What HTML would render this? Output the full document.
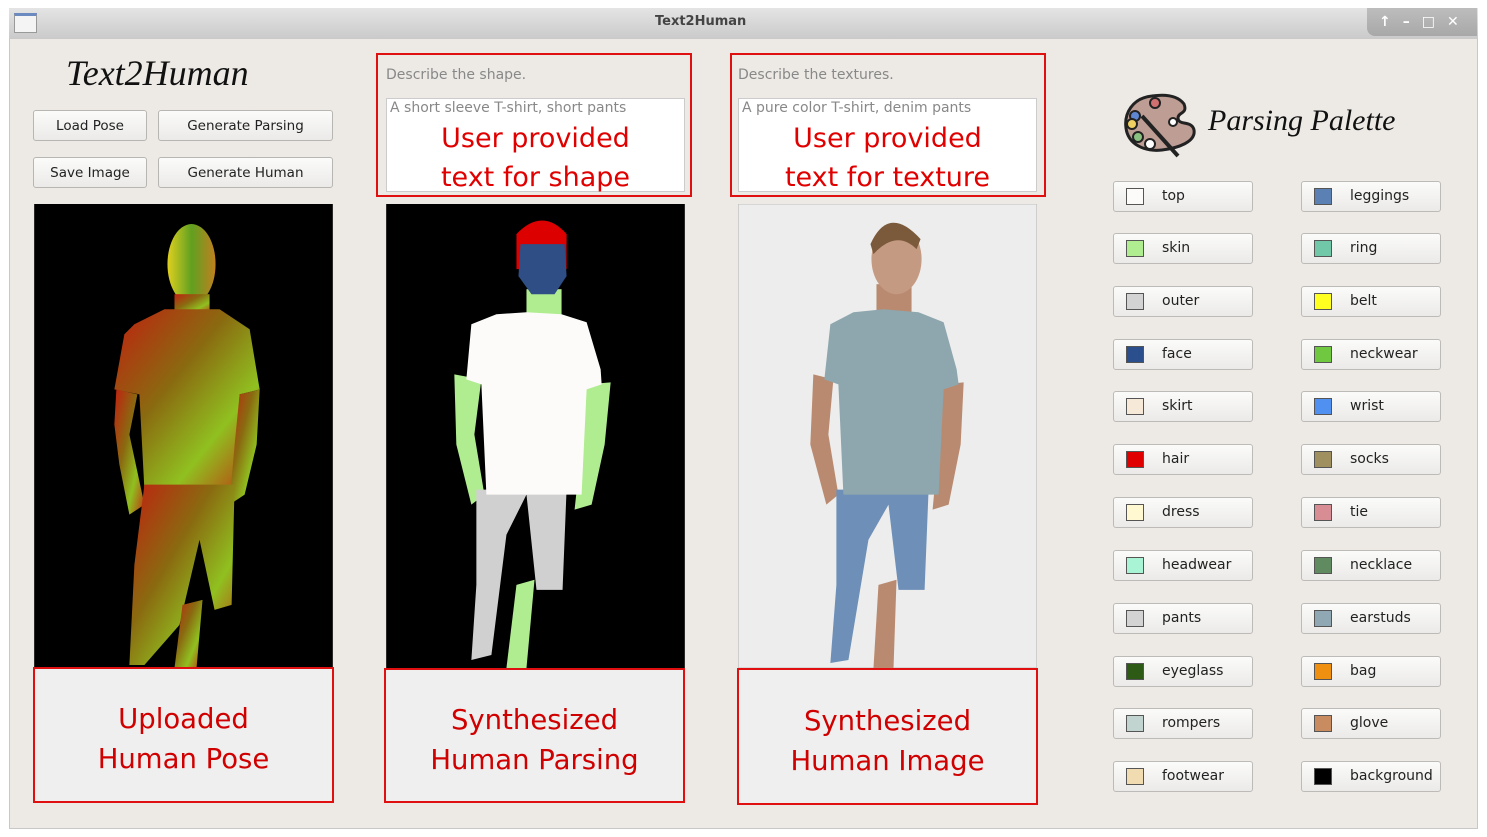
<!DOCTYPE html>
<html><head><meta charset="utf-8"><style>
*{margin:0;padding:0;box-sizing:border-box}
body{width:1487px;height:837px;background:#fff;position:relative;overflow:hidden;font-family:"DejaVu Sans","Liberation Sans",sans-serif}
.a{position:absolute}
.win{left:9px;top:8px;width:1469px;height:821px;background:#edeae6;border:1px solid #c8c8c8}
.title{left:9px;top:8px;width:1469px;height:31px;background:linear-gradient(#e4e4e4,#cacaca)}
.btn{background:linear-gradient(#fbfbfa,#ebeae8);border:1px solid #b8b6b2;border-radius:3px;font-size:13.5px;color:#222;text-align:center;line-height:30px}
.pb{width:140px;height:31px;background:linear-gradient(#fbfbfa,#ebeae8);border:1px solid #bdbbb7;border-radius:3px;font-size:14px;color:#222}
.pb i{position:absolute;left:12px;top:6px;width:18px;height:17px;border:1px solid #555}
.pb span{position:absolute;left:48px;top:6px}
.red{border:2px solid #e01010}
.lbl{background:#efefef;color:#d00000;font-size:27.5px;text-align:center;line-height:40px}
.hint{font-size:14px;color:#888}
.tb{background:#fff;border:1px solid #ccc}
.big{color:#e00000;font-size:27px;text-align:center;line-height:39px;width:100%;margin-top:2px}
.script{font-family:"Liberation Serif",cursive;font-style:italic}
</style></head><body>
<div class="a win"></div>
<div class="a title"></div>
<div class="a" style="left:655px;top:14px;font-size:13px;font-weight:bold;color:#444">Text2Human</div>
<div class="a" style="left:14px;top:13px;width:23px;height:20px;border:1px solid #999;background:#f4f4f4;border-top:3px solid #6a8ac0"></div>
<div class="a" style="left:1367px;top:8px;width:110px;height:28px;background:linear-gradient(#bdbdbd,#a8a8a8);border-radius:0 0 0 8px;color:#fff;font-size:14px;line-height:28px;letter-spacing:12px;padding-left:12px;font-weight:bold">↑–□✕</div>

<div class="a script" style="left:66px;top:52px;font-size:36px;color:#111">Text2Human</div>
<div class="a btn" style="left:33px;top:110px;width:114px;height:31px">Load Pose</div>
<div class="a btn" style="left:158px;top:110px;width:175px;height:31px">Generate Parsing</div>
<div class="a btn" style="left:33px;top:157px;width:114px;height:31px">Save Image</div>
<div class="a btn" style="left:158px;top:157px;width:175px;height:31px">Generate Human</div>

<div class="a red" style="left:376px;top:53px;width:316px;height:144px"></div>
<div class="a hint" style="left:386px;top:67px">Describe the shape.</div>
<div class="a tb" style="left:386px;top:98px;width:299px;height:94px"><div class="hint" style="padding:1px 3px">A short sleeve T-shirt, short pants</div><div class="big">User provided<br>text for shape</div></div>
<div class="a red" style="left:730px;top:53px;width:316px;height:144px"></div>
<div class="a hint" style="left:738px;top:67px">Describe the textures.</div>
<div class="a tb" style="left:738px;top:98px;width:299px;height:94px"><div class="hint" style="padding:1px 3px">A pure color T-shirt, denim pants</div><div class="big">User provided<br>text for texture</div></div>

<svg class="a" style="left:34px;top:204px" width="299" height="464" viewBox="0 0 298 463">
<defs><linearGradient id="g1" x1="0" y1="0" x2="1" y2="1"><stop offset="0" stop-color="#c02010"/><stop offset=".4" stop-color="#8a6a10"/><stop offset=".7" stop-color="#90c020"/><stop offset="1" stop-color="#c03010"/></linearGradient>
<linearGradient id="h1" x1="0" x2="1"><stop offset="0" stop-color="#e0d020"/><stop offset=".5" stop-color="#60a020"/><stop offset="1" stop-color="#c08020"/></linearGradient></defs>
<rect width="298" height="463" fill="#000"/>
<g fill="url(#g1)"><ellipse cx="157" cy="60" rx="24" ry="40" fill="url(#h1)"/><rect x="140" y="90" width="35" height="20"/>
<polygon points="100,120 130,105 185,105 215,125 225,185 205,190 200,285 110,285 105,190 80,185 90,130"/>
<polygon points="82,185 103,190 95,230 110,300 95,310 85,260 80,220"/>
<polygon points="205,190 225,185 222,240 210,290 195,300 200,240"/>
<polygon points="110,280 200,280 197,400 180,405 165,335 145,420 110,460 95,460 100,360"/>
<polygon points="148,400 168,395 162,463 140,463"/></g></svg>
<div class="a red lbl" style="left:33px;top:667px;width:301px;height:136px;padding-top:30px">Uploaded<br>Human Pose</div>

<svg class="a" style="left:386px;top:204px" width="299" height="464" viewBox="0 0 298 463">
<rect width="298" height="463" fill="#000"/>
<g fill="#b0ec90"><rect x="140" y="85" width="35" height="30"/>
<polygon points="68,170 95,175 88,230 98,290 85,300 70,240"/>
<polygon points="200,180 224,178 218,240 205,300 188,305 195,240"/>
<polygon points="130,380 148,375 140,463 120,463"/></g>
<polygon fill="#d0d0d0" points="90,285 180,285 176,385 150,385 140,290 120,330 105,450 85,455 90,380"/>
<polygon fill="#fdfbfa" points="85,120 110,110 140,108 175,110 200,118 214,165 215,180 200,185 195,290 100,290 95,180 80,175"/>
<path fill="#dd0000" d="M130 30 Q156 3 180 30 L180 65 L130 65Z"/>
<path fill="#2e4e85" d="M134 40 L178 40 L180 72 L168 90 L145 90 L132 72Z"/>
</svg>
<div class="a red lbl" style="left:384px;top:668px;width:301px;height:135px;padding-top:30px">Synthesized<br>Human Parsing</div>

<svg class="a" style="left:738px;top:204px" width="299" height="464" viewBox="0 0 298 463">
<rect width="298" height="463" fill="#ecedec" stroke="#c0c0c0"/>
<g fill="#b98a70"><rect x="138" y="80" width="35" height="30"/>
<polygon points="75,170 95,175 90,230 100,290 88,300 72,240"/>
<polygon points="205,180 225,178 222,240 210,300 194,305 200,240"/>
<polygon points="140,380 158,375 155,463 135,463"/></g>
<ellipse cx="158" cy="55" rx="25" ry="35" fill="#c59a82"/>
<path d="M132 40 Q150 0 182 35 L178 45 Q158 25 135 50Z" fill="#7a5a3a"/>
<polygon fill="#6d8fb8" points="98,285 190,285 186,385 160,385 150,300 130,335 110,455 92,458 98,380"/>
<polygon fill="#8ea6ad" points="92,120 115,108 145,105 180,108 205,118 218,165 220,180 205,185 200,290 105,290 100,180 86,175"/>
</svg>
<div class="a red lbl" style="left:737px;top:668px;width:301px;height:137px;padding-top:31px">Synthesized<br>Human Image</div>

<svg class="a" style="left:1122px;top:92px" width="76" height="66" viewBox="0 0 76 66">
<path d="M30 4 C10 6 2 22 4 36 C6 52 22 60 40 58 C56 56 74 50 72 38 C70 28 56 34 56 26 C56 20 66 22 62 12 C56 4 44 2 30 4Z" fill="#bd9d94" stroke="#222" stroke-width="3"/>
<circle cx="13" cy="24" r="5" fill="#5f86d0" stroke="#222" stroke-width="2"/><circle cx="10" cy="32" r="5" fill="#f0d060" stroke="#222" stroke-width="2"/>
<circle cx="16" cy="45" r="5" fill="#8ac080" stroke="#222" stroke-width="2"/><circle cx="28" cy="52" r="5" fill="#fff" stroke="#222" stroke-width="2"/>
<circle cx="33" cy="11" r="5" fill="#d07070" stroke="#222" stroke-width="2"/><circle cx="51" cy="30" r="4" fill="#fff" stroke="#222" stroke-width="2"/>
<line x1="20" y1="24" x2="56" y2="64" stroke="#222" stroke-width="4"/></svg>
<div class="a script" style="left:1208px;top:104px;font-size:30px;color:#111">Parsing Palette</div>

<div class="a pb" style="left:1113px;top:181px"><i style="background:#fdfbfa"></i><span>top</span></div>
<div class="a pb" style="left:1113px;top:233px"><i style="background:#b0ec90"></i><span>skin</span></div>
<div class="a pb" style="left:1113px;top:286px"><i style="background:#d3d3d3"></i><span>outer</span></div>
<div class="a pb" style="left:1113px;top:339px"><i style="background:#2b4e8c"></i><span>face</span></div>
<div class="a pb" style="left:1113px;top:391px"><i style="background:#f6e9d8"></i><span>skirt</span></div>
<div class="a pb" style="left:1113px;top:444px"><i style="background:#e00000"></i><span>hair</span></div>
<div class="a pb" style="left:1113px;top:497px"><i style="background:#fff8d0"></i><span>dress</span></div>
<div class="a pb" style="left:1113px;top:550px"><i style="background:#a8f4d4"></i><span>headwear</span></div>
<div class="a pb" style="left:1113px;top:603px"><i style="background:#d3d3d3"></i><span>pants</span></div>
<div class="a pb" style="left:1113px;top:656px"><i style="background:#2d5a14"></i><span>eyeglass</span></div>
<div class="a pb" style="left:1113px;top:708px"><i style="background:#c2d4d0"></i><span>rompers</span></div>
<div class="a pb" style="left:1113px;top:761px"><i style="background:#f0dcb0"></i><span>footwear</span></div>

<div class="a pb" style="left:1301px;top:181px"><i style="background:#5a80b4"></i><span>leggings</span></div>
<div class="a pb" style="left:1301px;top:233px"><i style="background:#70c8a8"></i><span>ring</span></div>
<div class="a pb" style="left:1301px;top:286px"><i style="background:#ffff20"></i><span>belt</span></div>
<div class="a pb" style="left:1301px;top:339px"><i style="background:#70c840"></i><span>neckwear</span></div>
<div class="a pb" style="left:1301px;top:391px"><i style="background:#5090f0"></i><span>wrist</span></div>
<div class="a pb" style="left:1301px;top:444px"><i style="background:#a09060"></i><span>socks</span></div>
<div class="a pb" style="left:1301px;top:497px"><i style="background:#d88c94"></i><span>tie</span></div>
<div class="a pb" style="left:1301px;top:550px"><i style="background:#608a60"></i><span>necklace</span></div>
<div class="a pb" style="left:1301px;top:603px"><i style="background:#90a8b4"></i><span>earstuds</span></div>
<div class="a pb" style="left:1301px;top:656px"><i style="background:#f09010"></i><span>bag</span></div>
<div class="a pb" style="left:1301px;top:708px"><i style="background:#c88c60"></i><span>glove</span></div>
<div class="a pb" style="left:1301px;top:761px"><i style="background:#000"></i><span>background</span></div>
</body></html>
